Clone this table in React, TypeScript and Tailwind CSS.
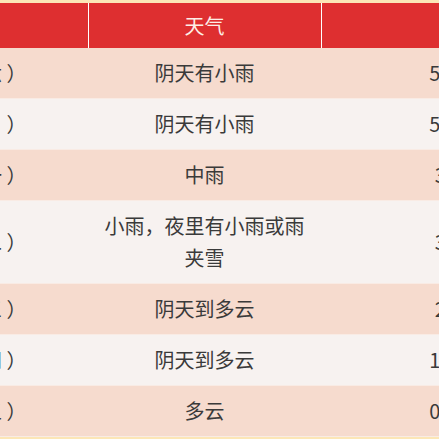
const rows = [
  { day: '11月04日（周六 ）', weather: '阴天有小雨', temp: '5℃ ~ 11℃' },
  { day: '11月05日（周日 ）', weather: '阴天有小雨', temp: '5℃ ~ 10℃' },
  { day: '11月06日（周一 ）', weather: '中雨', temp: '3℃ ~ 8℃' },
  { day: '11月07日（周二 ）', weather: '小雨，夜里有小雨或雨夹雪', temp: '3℃ ~ 6℃' },
  { day: '11月08日（周三 ）', weather: '阴天到多云', temp: '2℃ ~ 9℃' },
  { day: '11月09日（周四 ）', weather: '阴天到多云', temp: '1℃ ~ 10℃' },
  { day: '11月10日（周五 ）', weather: '多云', temp: '0℃ ~ 12℃' },
];

export default function App() {
  return (
    <div className="h-[439px] w-[439px] overflow-hidden bg-[#fce6b6] pt-[3px] font-['Noto_Sans_CJK_SC','Noto_Sans',sans-serif]">
      <table className="ml-[-200px] w-[831px] table-fixed border-collapse text-[20px] leading-[32px]">
        <colgroup>
          <col className="w-[288px]" />
          <col className="w-[233px]" />
          <col className="w-[310px]" />
        </colgroup>
        <thead>
          <tr className="h-[45px] bg-[#de2f30] text-[#fdeee6]">
            <th className="border-r border-white px-3 font-normal">日期</th>
            <th className="border-r border-white px-3 font-normal">天气</th>
            <th className="px-3 font-normal">气温</th>
          </tr>
        </thead>
        <tbody className="text-[#3a3a3a]">
          {rows.map((r, i) => (
            <tr
              key={r.day}
              className={`border-b border-[#f9ebe4] ${i % 2 === 0 ? 'bg-[#f6dbce]' : 'bg-[#f7f2f0]'}`}
            >
              <td className="py-[9px] pl-[10px] pr-[14px] text-center">{r.day}</td>
              <td className="px-3 py-[9px] text-center">{r.weather}</td>
              <td className="px-3 py-[9px] text-center">{r.temp}</td>
            </tr>
          ))}
        </tbody>
      </table>
    </div>
  );
}
